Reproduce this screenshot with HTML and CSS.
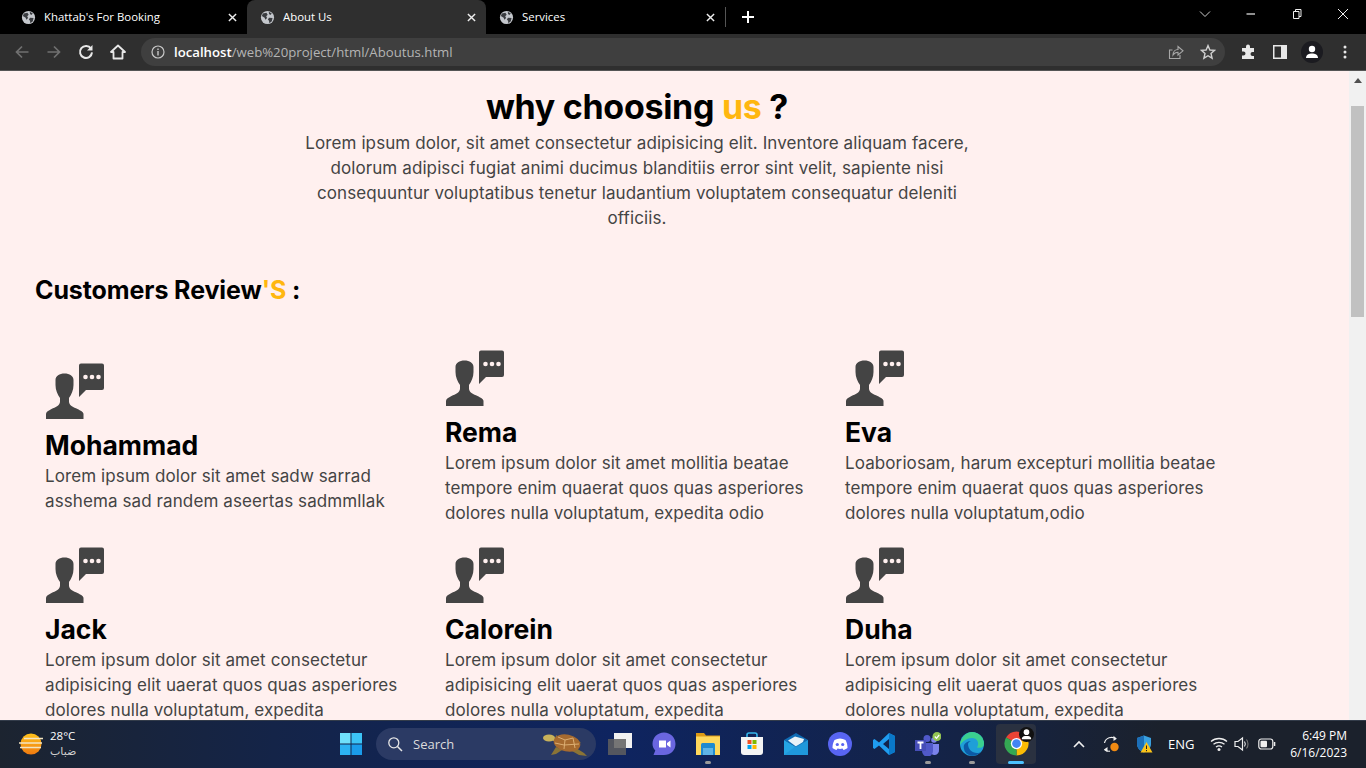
FILE: index.html
```html
<!DOCTYPE html>
<html lang="en">
<head>
<meta charset="utf-8">
<title>About Us</title>
<link rel="stylesheet" href="styles.css">
</head>
<body>
<svg class="defs" width="0" height="0" aria-hidden="true">
  <defs>
    <symbol id="globe" viewBox="0 0 16 16">
      <circle cx="8" cy="8" r="7" fill="#c4c7cc"/>
      <path d="M3 3.6 6.8 3 8.2 5 6.600 6.600 7.600 8.400 5.600 10.400 5 8.200 2 6.400ZM9.400 1.800 12.600 3.600 11 5.400 9.600 4.200ZM9.600 8.200 13.400 8.600 12.600 12 10 14 9.600 11.400 8.400 10Z" fill="#3a3c40"/>
    </symbol>
    <symbol id="close" viewBox="0 0 10 10">
      <path d="M1 1 9 9M9 1 1 9" stroke="currentColor" stroke-width="1.600" fill="none"/>
    </symbol>
    <symbol id="person" viewBox="0 0 60 58">
      <path d="M1 56V51C1 49 3.500 47.500 6.500 46 10.500 44 14.500 43 15 39V35C12.500 31.500 10.500 27 10.500 22V17C10.500 13 14.500 10.500 19.500 10.500 24.500 10.500 28.500 13 28.500 17V22C28.500 27 26.500 31.500 24 35V39C24.500 43 28.500 44 32.500 46 35.500 47.500 38.500 49 38.500 51V56Z" fill="#444"/>
      <path d="M36 0.500H57Q59 0.500 59 2.500V25Q59 27 57 27H41L34 34V2.500Q34 0.500 36 0.500Z" fill="#444"/>
      <circle cx="40.500" cy="14" r="2.300" fill="#fff0ef"/>
      <circle cx="47" cy="14" r="2.300" fill="#fff0ef"/>
      <circle cx="53.500" cy="14" r="2.300" fill="#fff0ef"/>
    </symbol>
  </defs>
</svg>

<div class="window">
  <header class="tabstrip">
    <div class="tab">
      <svg class="favicon"><use href="#globe"/></svg>
      <span class="tab-title">Khattab's For Booking</span>
      <svg class="tab-close"><use href="#close"/></svg>
    </div>
    <div class="tab tab-active">
      <svg class="favicon"><use href="#globe"/></svg>
      <span class="tab-title">About Us</span>
      <svg class="tab-close"><use href="#close"/></svg>
    </div>
    <div class="tab">
      <svg class="favicon"><use href="#globe"/></svg>
      <span class="tab-title">Services</span>
      <svg class="tab-close"><use href="#close"/></svg>
    </div>
    <span class="tab-sep"></span>
    <svg class="new-tab" viewBox="0 0 14 14"><path d="M7 1V13M1 7H13" stroke="#fff" stroke-width="2" fill="none"/></svg>
    <div class="win-controls">
      <svg class="win-btn" viewBox="0 0 12 12"><path d="M1 3.500 6 8.500 11 3.500" stroke="#ccc" fill="none"/></svg>
      <svg class="win-btn" viewBox="0 0 12 12"><path d="M1.500 6H10" stroke="#eee" fill="none" stroke-width="1.200"/></svg>
      <svg class="win-btn" viewBox="0 0 12 12"><path d="M2.500 3.500H8V10.500H2.500ZM4.500 3.500V1.500H10V8.500H8" stroke="#eee" fill="none"/></svg>
      <svg class="win-btn" viewBox="0 0 12 12"><path d="M1 1 11 11M11 1 1 11" stroke="#eee" fill="none"/></svg>
    </div>
  </header>

  <nav class="toolbar">
    <svg class="nav-icon" viewBox="0 0 16 16"><path d="M14.500 8H2.500M8 2.500 2.500 8 8 13.500" stroke="#707070" stroke-width="1.700" fill="none"/></svg>
    <svg class="nav-icon" viewBox="0 0 16 16"><path d="M1.500 8H13.500M8 2.500 13.500 8 8 13.500" stroke="#707070" stroke-width="1.700" fill="none"/></svg>
    <svg class="nav-icon" viewBox="0 0 16 16"><path d="M13 4.600A6 6 0 1 0 14 8.400" stroke="#e8e8e8" stroke-width="2" fill="none"/><path d="M14.500 1V6.500H9Z" fill="#e8e8e8"/></svg>
    <svg class="nav-icon" viewBox="0 0 16 16"><path d="M8 1.500 1 8H3.500V14.500H12.500V8H15Z" stroke="#e8e8e8" stroke-width="1.800" fill="none" stroke-linejoin="round"/></svg>
    <div class="omnibox">
      <svg class="info" viewBox="0 0 14 14"><circle cx="7" cy="7" r="6" stroke="#c8c8c8" stroke-width="1.200" fill="none"/><path d="M7 6V10.500M7 3.400V5" stroke="#c8c8c8" stroke-width="1.400"/></svg>
      <span class="url"><b>localhost</b>/web%20project/html/Aboutus.html</span>
      <svg class="omni-icon" viewBox="0 0 16 16"><path d="M4.500 6H1.500V14.500H12V11" stroke="#a8a8a8" fill="none" stroke-width="1.100"/><path d="M5 11C5 7.500 7.500 5.500 10 5.500V2.500L15 6.800 10 11V8.200C8 8.200 6.200 9 5 11Z" stroke="#a8a8a8" fill="none" stroke-width="1.100"/></svg>
      <svg class="omni-icon" viewBox="0 0 16 16"><path d="M8 1.600 9.900 6 14.600 6.400 11 9.500 12.100 14.200 8 11.700 3.900 14.200 5 9.500 1.400 6.400 6.100 6Z" stroke="#d0d0d0" stroke-width="1.400" fill="none"/></svg>
    </div>
    <div class="tool-actions">
      <svg class="tool-icon" viewBox="0 0 16 16"><path d="M6 2.500A2 2 0 0 1 10 2.500V4H14V8H12.500A2 2 0 0 0 12.500 12H14V15H2V11.500H3.500A2 2 0 0 0 3.500 7.500H2V4H6Z" fill="#e8e8e8"/></svg>
      <svg class="tool-icon" viewBox="0 0 16 16"><path d="M1 1H15V15H1Z" fill="#e8e8e8"/><path d="M2.500 2.500H9V13.500H2.500Z" fill="#2f2f2f"/></svg>
      <span class="avatar"><svg viewBox="0 0 16 16"><circle cx="8" cy="5" r="3.200" fill="#fff"/><path d="M2 14C2 10.500 5 9.400 8 9.400S14 10.500 14 14Z" fill="#fff"/></svg></span>
      <svg class="tool-icon" viewBox="0 0 16 16"><circle cx="8" cy="3" r="1.500" fill="#e8e8e8"/><circle cx="8" cy="8" r="1.500" fill="#e8e8e8"/><circle cx="8" cy="13" r="1.500" fill="#e8e8e8"/></svg>
    </div>
  </nav>

  <div class="viewport">
    <main class="page">
      <section class="why">
        <h1 class="why-title">why choosing <span class="accent">us</span> ?</h1>
        <p class="why-text">Lorem ipsum dolor, sit amet consectetur adipisicing elit. Inventore aliquam facere,<br>dolorum adipisci fugiat animi ducimus blanditiis error sint velit, sapiente nisi<br>consequuntur voluptatibus tenetur laudantium voluptatem consequatur deleniti<br>officiis.</p>
      </section>
      <h2 class="reviews-title">Customers Review<span class="accent">'S</span> :</h2>
      <section class="reviews">
        <article class="review">
          <svg class="review-icon"><use href="#person"/></svg>
          <h3 class="review-name">Mohammad</h3>
          <p class="review-text">Lorem ipsum dolor sit amet sadw sarrad<br>asshema sad randem aseertas sadmmllak</p>
        </article>
        <article class="review">
          <svg class="review-icon"><use href="#person"/></svg>
          <h3 class="review-name">Rema</h3>
          <p class="review-text">Lorem ipsum dolor sit amet mollitia beatae<br>tempore enim quaerat quos quas asperiores<br>dolores nulla voluptatum, expedita odio</p>
        </article>
        <article class="review">
          <svg class="review-icon"><use href="#person"/></svg>
          <h3 class="review-name">Eva</h3>
          <p class="review-text">Loaboriosam, harum excepturi mollitia beatae<br>tempore enim quaerat quos quas asperiores<br>dolores nulla voluptatum,odio</p>
        </article>
        <article class="review">
          <svg class="review-icon"><use href="#person"/></svg>
          <h3 class="review-name">Jack</h3>
          <p class="review-text">Lorem ipsum dolor sit amet consectetur<br>adipisicing elit uaerat quos quas asperiores<br>dolores nulla voluptatum, expedita</p>
        </article>
        <article class="review">
          <svg class="review-icon"><use href="#person"/></svg>
          <h3 class="review-name">Calorein</h3>
          <p class="review-text">Lorem ipsum dolor sit amet consectetur<br>adipisicing elit uaerat quos quas asperiores<br>dolores nulla voluptatum, expedita</p>
        </article>
        <article class="review">
          <svg class="review-icon"><use href="#person"/></svg>
          <h3 class="review-name">Duha</h3>
          <p class="review-text">Lorem ipsum dolor sit amet consectetur<br>adipisicing elit uaerat quos quas asperiores<br>dolores nulla voluptatum, expedita</p>
        </article>
      </section>
    </main>
    <div class="scrollbar">
      <span class="scroll-arrow"></span>
      <span class="scroll-thumb"></span>
    </div>
  </div>

  <footer class="taskbar">
    <div class="weather">
      <svg class="weather-icon" viewBox="0 0 28 28"><defs><linearGradient id="sun" x1="0" y1="0" x2="0" y2="1"><stop offset="0" stop-color="#ffc21a"/><stop offset="1" stop-color="#f07a10"/></linearGradient></defs><circle cx="14" cy="14" r="10.500" fill="url(#sun)"/><path d="M7 8.500H26M2 13H25M3 17.500H24" stroke="#f3e4c0" stroke-width="1.600"/></svg>
      <div class="weather-text"><span>28°C</span><span class="weather-ar" lang="ar" dir="rtl">ضباب</span></div>
    </div>
    <div class="task-center">
      <span class="task-cell"><svg class="task-icon" viewBox="0 0 24 24"><path d="M1 1H11.500V11.500H1Z" fill="#6fe0fb"/><path d="M12.500 1H23V11.500H12.500Z" fill="#3cc4f6"/><path d="M1 12.500H11.500V23H1Z" fill="#2cb2f2"/><path d="M12.500 12.500H23V23H12.500Z" fill="#1a9ceb"/></svg></span>
      <div class="search">
        <svg class="search-icon" viewBox="0 0 16 16"><circle cx="6.800" cy="6.800" r="5" stroke="#e6e6e6" stroke-width="1.300" fill="none"/><path d="M10.500 10.500 15 15" stroke="#e6e6e6" stroke-width="1.500"/></svg>
        <span class="search-label">Search</span>
        <svg class="turtle" viewBox="0 0 46 26">
          <path d="M14 16 9 24 14 23 20 19ZM34 17 42 22 45 25 37 24 30 20ZM34 8 39 12 33 12ZM13 9 14 4 19 7Z" fill="#8a7436"/>
          <ellipse cx="7" cy="7" rx="6" ry="3.400" fill="#c9b25a"/>
          <path d="M11 8 16 10" stroke="#c9b25a" stroke-width="3.500"/>
          <ellipse cx="25" cy="12" rx="13.500" ry="8.500" transform="rotate(12 25 12)" fill="#a66a2f"/>
          <path d="M16 6 23 9 31 7M23 9 22 18M31 7 33 17M13 12 22 14 37 13" stroke="#dcae72" fill="none"/>
        </svg>
      </div>
      <span class="task-cell"><svg class="task-icon" viewBox="0 0 24 24"><path d="M6 1H24V16H6Z" fill="#f1f1f1"/><path d="M0 7H18V23H0Z" fill="#5f5f5f" opacity=".85"/></svg></span>
      <span class="task-cell"><svg class="task-icon" viewBox="0 0 24 24"><path d="M12 .5C18.500 .5 23.500 5.500 23.500 12S18.500 23 12 23H1.500L3.300 18.500C1.500 16.500 .5 14.500 .5 12 .5 5.500 5.500 .5 12 .5Z" fill="#6a66e0"/><path d="M7 8.500H14V15.500H7ZM15 11 18.500 8.500V15.500L15 13Z" fill="#fff"/></svg></span>
      <span class="task-cell task-open"><svg class="task-icon" viewBox="0 0 24 24"><path d="M0 1H8L10 3.500H24V23H0Z" fill="#dd9a15"/><path d="M0 4.500H24V23H0Z" fill="#ffd85c"/><path d="M5 12.500Q5 11 6.500 11H17.500Q19 11 19 12.500V23H5Z" fill="#1f8ad0"/><path d="M7 16H17V23H7Z" fill="#5fb4e6"/></svg></span>
      <span class="task-cell"><svg class="task-icon" viewBox="0 0 24 24"><path d="M7 6V3A2 2 0 0 1 9 1H15A2 2 0 0 1 17 3V6" stroke="#35b6ec" stroke-width="1.600" fill="none"/><path d="M1 5H23V20A3 3 0 0 1 20 23H4A3 3 0 0 1 1 20Z" fill="#f4f4f4"/><path d="M7.500 8H11.500V12H7.500Z" fill="#f25022"/><path d="M12.500 8H16.500V12H12.500Z" fill="#7fba00"/><path d="M7.500 13H11.500V17H7.500Z" fill="#00a4ef"/><path d="M12.500 13H16.500V17H12.500Z" fill="#ffb900"/></svg></span>
      <span class="task-cell"><svg class="task-icon" viewBox="0 0 24 24"><path d="M12 1 24 8 12 15 0 8Z" fill="#0f6cb5"/><path d="M4 8.500 11 4.500 20 7 19 10 12 14.500Z" fill="#e8f2f7"/><path d="M0 8 12 15 24 8V23H0Z" fill="#25a5e4"/><path d="M24 23H0L12 14 24 8Z" fill="#1c8fd6" opacity=".6"/></svg></span>
      <span class="task-cell"><svg class="task-icon" viewBox="0 0 24 24"><circle cx="12" cy="12" r="12" fill="#5865f2"/><path d="M6.500 8C10 6 14 6 17.500 8 19 10.500 19.500 13.500 19.500 16 18 17.200 16.500 17.800 15.500 18L14.500 16.500C12.500 17 11.500 17 9.500 16.500L8.500 18C7.500 17.800 6 17.200 4.500 16 4.500 13.500 5 10.500 6.500 8Z" fill="#fff"/><circle cx="9.300" cy="12.500" r="1.600" fill="#5865f2"/><circle cx="14.700" cy="12.500" r="1.600" fill="#5865f2"/></svg></span>
      <span class="task-cell"><svg class="task-icon" viewBox="0 0 24 24"><path d="M17 1 23 4V20L17 23 7 13.500 2.500 17 1 16V8L2.500 7 7 10.500ZM17 7 11 12 17 17Z" fill="#1f9cf0"/><path d="M17 1 23 4V20L17 23Z" fill="#0a78c8"/></svg></span>
      <span class="task-cell task-open"><svg class="task-icon teams" viewBox="0 0 26 24"><circle cx="19" cy="8" r="2.800" fill="#7b83eb"/><path d="M15 12H24V18A4.500 4.500 0 0 1 15 19Z" fill="#7b83eb"/><circle cx="12" cy="6.500" r="3.500" fill="#5059c9"/><path d="M7 11H18V19A5.500 5.500 0 0 1 7 19Z" fill="#5059c9"/><path d="M0 8H11V19H0Z" fill="#464eb8"/><path d="M2.500 10.500H8.500M5.500 10.500V17" stroke="#fff" stroke-width="1.800"/><circle cx="22" cy="4.500" r="4.500" fill="#92c353"/><path d="M19.800 4.500 21.500 6.300 24.200 3" stroke="#fff" stroke-width="1.200" fill="none"/></svg></span>
      <span class="task-cell task-open"><svg class="task-icon" viewBox="0 0 24 24"><circle cx="12" cy="12" r="12" fill="#1f9fd8"/><path d="M12 0A12 12 0 0 1 24 12C24 15.500 20 16.500 17 15.500 20 11 17 6 12 6 7 6 3 9 0 13 .5 6 6 0 12 0Z" fill="#3bd08f"/><path d="M8 12C8 17 12 21 17 21 19 21 20 20.500 21 20 18 23 14 24.500 10 23.500 5 22 3 17 4 13 5 11 8 9 11 9 9.500 9.500 8 10.500 8 12Z" fill="#0c5aa6"/></svg></span>
      <span class="task-cell task-active"><svg class="task-icon chrome" viewBox="0 0 24 24"><path d="M12 12 2 6.250A11.500 11.500 0 0 1 22 6.250Z" fill="#ea4335"/><path d="M12 12 22 6.250A11.500 11.500 0 0 1 12 23.500Z" fill="#fbbc05"/><path d="M12 12 12 23.500A11.500 11.500 0 0 1 2 6.250Z" fill="#34a853"/><circle cx="12" cy="12" r="5.400" fill="#fff"/><circle cx="12" cy="12" r="4.200" fill="#4285f4"/></svg><span class="chrome-badge"><svg viewBox="0 0 16 16"><circle cx="8" cy="5.500" r="3" fill="#fff"/><path d="M3 13C3 10 5.500 9.500 8 9.500S13 10 13 13Z" fill="#fff"/></svg></span></span>
    </div>
    <div class="tray">
      <svg class="tray-caret" viewBox="0 0 12 8"><path d="M1 7 6 2 11 7" stroke="#f0f0f0" stroke-width="1.600" fill="none"/></svg>
      <svg class="tray-icon tray-sync" viewBox="0 0 18 18"><path d="M14 3.800C10 .8 3.500 2.500 2.500 8M2.500 14.500C3.500 15.500 5.500 16.500 8 16.200" stroke="#eee" stroke-width="1.200" fill="none"/><path d="M11.500 .8 14.800 3.800 11.500 6ZM5.500 12 2 14.500 5.500 17Z" fill="#eee"/><circle cx="12.500" cy="12" r="4.200" fill="#f08a13"/></svg>
      <svg class="tray-icon tray-shield" viewBox="0 0 18 18"><path d="M9 .5 16 3V9C16 13 13 16 9 17.500 5 16 2 13 2 9V3Z" fill="#39a0e0"/><path d="M9 .5V17.500C5 16 2 13 2 9V3Z" fill="#1c6fb8"/><path d="M11.500 7 17.500 17.500H5.500Z" fill="#fcc419"/><path d="M11.500 10.500V14M11.500 15V16.200" stroke="#222" stroke-width="1"/></svg>
      <span class="tray-lang">ENG</span>
      <svg class="tray-icon tray-wifi" viewBox="0 0 18 18"><path d="M1 6.500C5.500 2.500 12.500 2.500 17 6.500M3.500 9.300C6.500 6.700 11.500 6.700 14.500 9.300M6 12C7.700 10.700 10.300 10.700 12 12" stroke="#eee" stroke-width="1.300" fill="none"/><circle cx="9" cy="14.500" r="1.500" fill="#eee"/></svg>
      <svg class="tray-icon tray-vol" viewBox="0 0 18 18"><path d="M2 6.500H5L9.500 3V15L5 11.500H2Z" stroke="#eee" stroke-width="1.200" fill="none"/><path d="M11.500 6.500C12.500 8 12.500 10 11.500 11.500" stroke="#eee" stroke-width="1.100" fill="none"/><path d="M13.500 4.500C15.500 7 15.500 11 13.500 13.500" stroke="#777" stroke-width="1.100" fill="none"/></svg>
      <svg class="tray-icon tray-batt" viewBox="0 0 18 18"><rect x=".8" y="4" width="14" height="10" rx="2.500" stroke="#eee" stroke-width="1.200" fill="none"/><rect x="2.500" y="5.800" width="6.500" height="6.400" rx="1" fill="#eee"/><rect x="15.800" y="7" width="1.500" height="4" fill="#eee"/></svg>
      <div class="clock"><span>6:49 PM</span><span>6/16/2023</span></div>
    </div>
  </footer>
</div>
</body>
</html>
```

FILE: styles.css
```css
* { box-sizing: border-box; }
html, body { margin: 0; height: 100%; overflow: hidden; }
body { font-family: "Open Sans", "Liberation Sans", sans-serif; background: #000; }
.defs { position: absolute; }
svg { display: block; flex: none; }

.window { display: flex; flex-direction: column; height: 768px; width: 1366px; }

/* tab strip */
.tabstrip { height: 34px; background: #000; display: flex; align-items: flex-end; padding-left: 8px; flex: none; }
.tab { width: 239px; height: 34px; display: flex; align-items: center; padding: 0 10px 0 13px; color: #fff; font-size: 11.400px; border-radius: 8px 8px 0 0; }
.tab-active { background: #2f2f2f; }
.favicon { width: 15px; height: 15px; }
.tab-title { margin-left: 8px; padding-bottom: 2px; flex: 1; white-space: nowrap; }
.tab-close { width: 9px; height: 9px; color: #eee; }
.tab-sep { width: 1px; height: 20px; background: #555; margin: 0 0 7px 0; }
.new-tab { width: 14px; height: 14px; margin: 0 0 10px 15px; }
.win-controls { margin-left: auto; height: 100%; display: flex; align-items: flex-start; padding-top: 8px; }
.win-btn { width: 12px; height: 12px; margin-right: 34px; }
.win-controls .win-btn:last-child { margin-right: 17px; }

/* toolbar */
.toolbar { height: 37px; background: #2f2f2f; border-bottom: 1px solid #555; display: flex; align-items: center; padding: 0 13px 0 14px; flex: none; }
.nav-icon { width: 16px; height: 16px; margin-right: 16px; }
.nav-icon:nth-of-type(4) { margin-right: 15px; }
.omnibox { width: 1085px; height: 28px; border-radius: 14px; background: #3f3f3f; display: flex; align-items: center; padding: 0 9px 0 10px; }
.info { width: 14px; height: 14px; }
.url { margin-left: 9px; flex: 1; font-size: 13.200px; color: #b4b4b4; white-space: nowrap; }
.url b { color: #fff; font-weight: 600; }
.omni-icon { width: 16px; height: 16px; margin-left: 16px; }
.tool-actions { display: flex; align-items: center; margin-left: 15px; }
.tool-icon { width: 16px; height: 16px; margin-right: 16px; }
.tool-actions .tool-icon:last-child { margin-right: 0; }
.avatar { width: 22px; height: 22px; border-radius: 50%; background: #1b1b20; display: flex; align-items: center; justify-content: center; margin: 0 14px 0 -3px; }
.avatar svg { width: 16px; height: 16px; }

/* page */
.viewport { flex: 1; min-height: 0; display: flex; overflow: hidden; background: #fff0ef; }
.page { flex: 1; min-width: 0; font-family: Inter, "Open Sans", sans-serif; overflow: hidden; }
.scrollbar { width: 17px; background: #f1f1f1; display: flex; flex-direction: column; padding: 0 2px; }
.scroll-arrow { width: 0; height: 0; border: 4px solid transparent; border-top: 0; border-bottom: 5px solid #505050; margin: 7px auto 0; }
.scroll-thumb { height: 211px; background: #c1c1c1; margin-top: 23px; }

.why { width: 700px; margin-left: 287px; text-align: center; }
.why-title { margin: 14px 0 0; font-size: 34px; line-height: 44px; font-weight: 700; color: #000; letter-spacing: -.3px; }
.accent { color: #ffb70f; }
.why-text { margin: 2px 0 0; font-size: 17px; line-height: 25px; color: #444; letter-spacing: .1px; white-space: nowrap; }
.reviews-title { margin: 41px 0 0 35px; font-size: 25px; line-height: 36px; font-weight: 700; color: #000; letter-spacing: -.1px; }

.reviews { display: grid; grid-template-columns: repeat(3, 400px); align-items: center; padding-left: 45px; margin-top: 42px; row-gap: 21px; }
.review { display: flex; flex-direction: column; }
.review-icon { width: 60px; height: 58px; }
.review-name { margin: 6px 0 0; font-size: 26.500px; line-height: 36px; font-weight: 700; color: #000; }
.review-text { margin: 1px 0 0; font-size: 17px; line-height: 25px; color: #444; white-space: nowrap; letter-spacing: .1px; }

/* taskbar */
.taskbar { height: 48px; flex: none; display: grid; grid-template-columns: 329px 759px 1fr; align-items: center; padding-bottom: 1px; background: linear-gradient(90deg, #1c2430 0%, #142448 20%, #0e2460 45%, #142346 70%, #1b212c 85%, #1b212c 100%); box-shadow: inset 0 1px 0 #333c4a; color: #fff; font-size: 12px; }
.weather { display: flex; align-items: center; padding-left: 17px; }
.weather-icon { width: 28px; height: 28px; }
.weather-text { display: flex; flex-direction: column; margin-left: 5px; font-size: 11.500px; line-height: 16px; }
.weather-ar { color: #d0d0d0; font-size: 11px; text-align: left; direction: ltr; font-family: "DejaVu Sans", sans-serif; }

.task-center { display: flex; align-items: center; }
.task-cell { position: relative; width: 44px; height: 40px; display: flex; align-items: center; justify-content: center; flex: none; }
.task-icon { width: 24px; height: 24px; }
.teams { width: 26px; }
.chrome { width: 25px; height: 25px; }
.task-open::after { content: ""; position: absolute; left: 19px; bottom: 0; width: 6px; height: 3px; border-radius: 2px; background: #9a9a9a; }
.task-active { background: #2a3140; border-radius: 4px; width: 40px; margin-left: 2px; }
.task-active::after { content: ""; position: absolute; left: 12px; bottom: 0; width: 16px; height: 3px; border-radius: 2px; background: #4cc2ff; }
.chrome-badge { position: absolute; right: 2px; top: 3px; width: 15px; height: 15px; border-radius: 50%; background: #111; }
.chrome-badge svg { width: 15px; height: 15px; }

.search { width: 220px; height: 32px; margin: 0 2px 0 3px; border-radius: 16px; background: #2b3a64; display: flex; align-items: center; padding-left: 11px; flex: none; position: relative; }
.search-icon { width: 16px; height: 16px; }
.search-label { margin-left: 10px; font-size: 13px; color: #dcdcdc; }
.turtle { position: absolute; right: 8px; top: 3px; width: 46px; height: 26px; }

.tray { display: flex; align-items: center; position: relative; height: 100%; }
.tray-caret { width: 12px; height: 8px; margin-left: -15px; }
.tray-icon { width: 18px; height: 18px; }
.tray-sync { margin-left: 17px; }
.tray-shield { margin-left: 15px; }
.tray-lang { margin-left: 15px; font-size: 13px; width: 25px; }
.tray-wifi { margin-left: 17px; }
.tray-vol { margin-left: 5px; }
.tray-batt { margin-left: 7px; }
.clock { margin-left: auto; padding-right: 19px; display: flex; flex-direction: column; align-items: flex-end; font-size: 12px; line-height: 17px; }
```
